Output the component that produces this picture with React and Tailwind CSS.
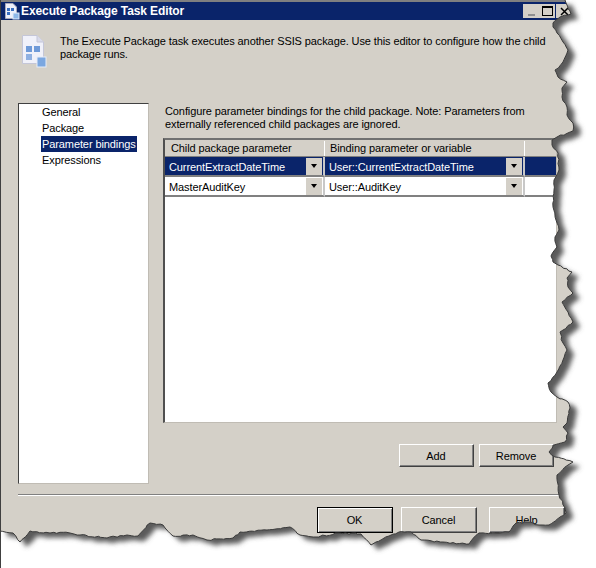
// App.jsx - Execute Package Task Editor dialog with a torn paper edge

const EDGE = [
  [565, 0], [566, 3], [571, 14], [560, 17], [553, 23], [553, 27], [557, 33], [563, 42], [568, 50], [563, 62],
  [555, 70], [558, 77], [567, 82], [562, 88], [562, 97], [567, 107], [567, 115], [573, 123], [573, 131], [557, 137],
  [552, 140], [552, 145], [558, 153], [559, 170], [554, 180], [554, 190], [553, 207], [556, 220], [559, 230], [555, 237],
  [557, 247], [551, 256], [553, 262], [558, 265], [572, 272], [567, 278], [568, 287], [573, 293], [562, 302], [568, 312],
  [573, 322], [560, 332], [563, 343], [567, 350], [563, 360], [557, 372], [548, 383], [551, 392], [557, 397], [568, 402],
  [570, 408], [567, 423], [563, 427], [568, 433], [565, 442], [554, 445], [549, 452], [555, 457], [573, 462], [568, 465],
  [557, 475], [559, 495], [565, 508], [566, 513], [549, 525], [539, 525], [529, 522], [516, 523], [509, 532], [496, 533],
  [479, 533], [469, 544], [443, 542], [421, 540], [411, 532], [399, 532], [389, 536], [376, 542], [371, 545], [361, 534],
  [339, 533], [316, 537], [300, 535], [290, 527], [267, 530], [240, 532], [233, 538], [207, 540], [193, 535], [173, 536],
  [163, 525], [150, 523], [138, 536], [127, 535], [107, 538], [80, 535], [70, 533], [50, 533], [30, 531], [20, 542],
  [13, 533], [0, 531],
];

// break each segment up and shake it a little so the tear looks rough
function roughEdge() {
  const out = [];
  let seed = 7;
  const next = () => {
    seed = (seed * 16807) % 2147483647;
    return (seed % 1000) / 1000 - 0.5;
  };
  EDGE.forEach(([x, y], i) => {
    out.push([x, y]);
    const to = EDGE[i + 1];
    if (!to) return;
    const steps = Math.floor(Math.hypot(to[0] - x, to[1] - y) / 3);
    for (let s = 1; s < steps; s++) {
      const t = s / steps;
      out.push([x + (to[0] - x) * t + next() * 1.6, y + (to[1] - y) * t + next() * 1.6]);
    }
  });
  return 'M0 0L' + out.map(([x, y]) => `${x.toFixed(1)} ${y.toFixed(1)}`).join('L') + 'Z';
}

function TornEdge() {
  const shape = roughEdge();
  const outside = 'M0 0H596V568H0Z' + shape;
  return (
    <svg className="absolute left-[-1px] top-0 pointer-events-none" width="596" height="568" viewBox="0 0 596 568">
      <defs>
        <clipPath id="outside">
          <path d={outside} clipRule="evenodd" />
        </clipPath>
        <filter id="soft" x="-5%" y="-5%" width="110%" height="110%">
          <feGaussianBlur stdDeviation="2.4" />
        </filter>
      </defs>
      <path d={outside} fill="#fff" fillRule="evenodd" />
      <g clipPath="url(#outside)">
        <path d={shape} transform="translate(7 5)" fill="#5a5a5a" filter="url(#soft)" />
      </g>
      <path d={shape.replace('M0 0L', 'M565 0L').replace('Z', '')} fill="none" stroke="#3a3a3a" strokeWidth="1" />
    </svg>
  );
}

function SmallIcon() {
  return (
    <svg width="16" height="17" viewBox="0 0 16 17" className="ml-[3px] shrink-0">
      <path d="M1.5 .5H9L12.5 4V15.5H1.5Z" fill="#eef0fa" stroke="#aab" />
      <rect x="3" y="5" width="3" height="3" fill="#3a6fc0" />
      <rect x="7" y="5" width="3" height="3" fill="#3a6fc0" />
      <rect x="3" y="9" width="3" height="3" fill="#3a6fc0" />
      <rect x="9" y="10" width="6" height="6" fill="#8fb8e8" stroke="#dfe8f8" />
    </svg>
  );
}

function BigIcon() {
  return (
    <svg width="25" height="33" viewBox="0 0 25 33" className="shrink-0">
      <path d="M.5 .5H15L21.5 7V28.5H.5Z" fill="#f0f1fa" stroke="#c4c6d8" />
      <path d="M15 .5V7H21.5" fill="#d8daea" stroke="#c4c6d8" />
      <rect x="4" y="11" width="6" height="6" fill="#6f9ad8" />
      <rect x="12" y="11" width="6" height="6" fill="#6f9ad8" />
      <rect x="4" y="19" width="6" height="6" fill="#8fb0e2" />
      <rect x="15" y="22" width="9" height="10" fill="#7ba7e0" stroke="#e6ecf8" />
    </svg>
  );
}

function WinButton({ children, className, isDefault }) {
  return (
    <button
      className={`${className} flex items-center justify-center pt-px pr-px text-black ${
        isDefault
          ? 'border border-black shadow-[inset_1px_1px_0_#fff,inset_-1px_-1px_0_#808080]'
          : 'border border-t-white border-l-white border-r-[#404040] border-b-[#404040] shadow-[inset_-1px_-1px_0_#808080]'
      }`}
    >
      {children}
    </button>
  );
}

function DropButton() {
  return (
    <div className="w-[16px] h-[17px] bg-[#d4d0c8] flex items-center justify-center shrink-0">
      <div className="w-0 h-0 border-l-[3px] border-r-[3px] border-t-[4px] border-l-transparent border-r-transparent border-t-black" />
    </div>
  );
}

function Cell({ text, selected, width, pad }) {
  return (
    <div className={`${width} ${pad} h-[20px] flex items-center justify-between pr-px border-r-2 border-b-2 border-b-[#808080] border-r-[#c8c8c8] ${selected ? 'text-white bg-[#0a246a]' : ''}`}>
      <span className="pt-[2px]">{text}</span>
      <DropButton />
    </div>
  );
}

export default function App() {
  const menu = ['General', 'Package', 'Parameter bindings', 'Expressions'];

  return (
    <div className="relative w-[596px] h-[568px] overflow-hidden bg-[#d4d0c8] border-l border-[#404040] text-[11px] leading-[13px] tracking-[-0.1px] text-black [font-family:'Liberation_Sans',sans-serif]">
      <div className="h-[2px] bg-[#808080]" />

      {/* Title bar */}
      <div className="h-[18px] bg-[#0a246a] flex items-center text-white">
        <SmallIcon />
        <span className="ml-[1px] text-[12px] font-bold tracking-[-0.1px]">Execute Package Task Editor</span>
        <div className="ml-auto mr-[24px] flex">
          <div className="w-[16px] h-[14px] bg-[#d4d0c8] flex items-end justify-center pb-[2px]">
            <div className="w-[7px] h-[2px] bg-[#909090]" />
          </div>
          <div className="w-[16px] h-[14px] bg-[#d4d0c8] flex items-center justify-center">
            <div className="w-[11px] h-[10px] border border-t-2 border-black" />
          </div>
          <div className="w-[16px] h-[14px] ml-px bg-[#d4d0c8] flex items-center justify-center">
            <svg width="9" height="9" viewBox="0 0 9 9"><path d="M1 1L8 8M8 1L1 8" stroke="#000" strokeWidth="1.5" /></svg>
          </div>
        </div>
      </div>

      {/* Description */}
      <div className="h-[83px] flex pl-[21px] pt-[15px]">
        <BigIcon />
        <p className="ml-[13px] w-[500px]">
          The Execute Package task executes another SSIS package. Use this editor to configure how the child package runs.
        </p>
      </div>

      {/* Pages list and bindings grid */}
      <div className="h-[381px] flex pl-[17px]">
        <div className="w-[131px] h-[381px] bg-white border-t border-l border-t-[#404040] border-l-[#404040] border-r border-b border-r-[#c0bcb4] border-b-[#c0bcb4] pl-[22px]">
          {menu.map((item) => (
            <div
              key={item}
              className={`h-[16px] w-[96px] flex items-center pl-[1px] whitespace-nowrap ${item === 'Parameter bindings' ? 'bg-[#0a246a] text-white' : ''}`}
            >
              {item}
            </div>
          ))}
        </div>

        <div className="ml-[14px] w-[394px]">
          <p className="pt-[2px] pl-[2px] h-[35px]">
            Configure parameter bindings for the child package. Note: Parameters from externally referenced child packages are ignored.
          </p>

          <div className="h-[285px] bg-white border-t-2 border-l-2 border-t-[#707070] border-l-[#505050] border-r border-b border-r-[#c0bcb4] border-b-[#c0bcb4]">
            <div className="h-[17px] bg-[#d4d0c8] flex items-center border-b border-[#808080]">
              <div className="w-[160px] pl-[6px] border-r border-white h-[15px] flex items-center">Child package parameter</div>
              <div className="w-[200px] pl-[5px] border-r border-white h-[15px] flex items-center">Binding parameter or variable</div>
            </div>
            <div className="flex">
              <Cell text="CurrentExtractDateTime" selected width="w-[160px]" pad="pl-[4px]" />
              <Cell text="User::CurrentExtractDateTime" selected width="w-[200px]" pad="pl-[4px]" />
              <div className="flex-1 h-[20px] bg-[#0a246a] border-b-2 border-[#808080]" />
            </div>
            <div className="flex">
              <Cell text="MasterAuditKey" width="w-[160px]" pad="pl-[4px]" />
              <Cell text="User::AuditKey" width="w-[200px]" pad="pl-[4px]" />
              <div className="flex-1 h-[20px] border-b-2 border-[#808080]" />
            </div>
          </div>

          <div className="flex justify-end gap-[5px] mt-[21px] pr-[3px]">
            <WinButton className="w-[75px] h-[23px]">Add</WinButton>
            <WinButton className="w-[75px] h-[23px]">Remove</WinButton>
          </div>
        </div>
      </div>

      {/* Footer */}
      <div className="ml-[17px] mt-[10px] h-[2px] border-t border-b border-t-[#808080] border-b-white" />
      <div className="flex pl-[316px] pt-[11px] gap-[8px]">
        <WinButton className="w-[76px] h-[26px]" isDefault>OK</WinButton>
        <WinButton className="w-[76px] h-[26px]">Cancel</WinButton>
        <WinButton className="w-[76px] h-[26px] ml-[4px]">Help</WinButton>
      </div>

      <TornEdge />
    </div>
  );
}
